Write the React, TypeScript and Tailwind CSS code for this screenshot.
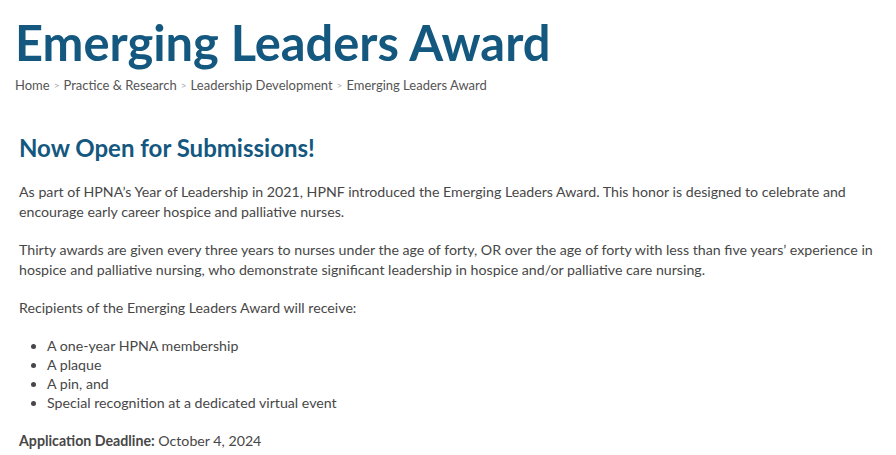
export default function App() {
  return (
    <div className="min-h-[455px] bg-white font-['Lato','Liberation_Sans',sans-serif] text-[#474747]">
      <header className="pl-[15px] pt-[12px]">
        <h1 className="text-[48.8px] font-bold leading-[60px] text-[#14587f]">Emerging Leaders Award</h1>
        <nav className="mt-[4px] flex items-center gap-[4px] text-[13px] text-[#555]">
          <span>Home</span>
          <span className="text-[10px] text-[#aaa]">&gt;</span>
          <span>Practice &amp; Research</span>
          <span className="text-[10px] text-[#aaa]">&gt;</span>
          <span>Leadership Development</span>
          <span className="text-[10px] text-[#aaa]">&gt;</span>
          <span>Emerging Leaders Award</span>
        </nav>
      </header>

      <main className="pl-[19px] pr-4 pt-[36px] text-[14.2px] leading-[20px]">
        <h2 className="mb-[18px] text-[24px] font-bold leading-[32px] text-[#14587f]">Now Open for Submissions!</h2>
        <p className="mb-[18px]">
          As part of HPNA’s Year of Leadership in 2021, HPNF introduced the Emerging Leaders Award. This honor is designed to celebrate and encourage early career hospice and palliative nurses.
        </p>
        <p className="mb-[18px]">
          Thirty awards are given every three years to nurses under the age of forty, OR over the age of forty with less than five years’ experience in hospice and palliative nursing, who demonstrate significant leadership in hospice and/or palliative care nursing.
        </p>
        <p className="mb-[18px]">Recipients of the Emerging Leaders Award will receive:</p>
        <ul className="mb-[18px] list-disc pl-[28px] leading-[19.3px]">
          <li>A one-year HPNA membership</li>
          <li>A plaque</li>
          <li>A pin, and</li>
          <li>Special recognition at a dedicated virtual event</li>
        </ul>
        <p>
          <strong className="font-bold">Application Deadline:</strong> October 4, 2024
        </p>
      </main>
    </div>
  );
}
